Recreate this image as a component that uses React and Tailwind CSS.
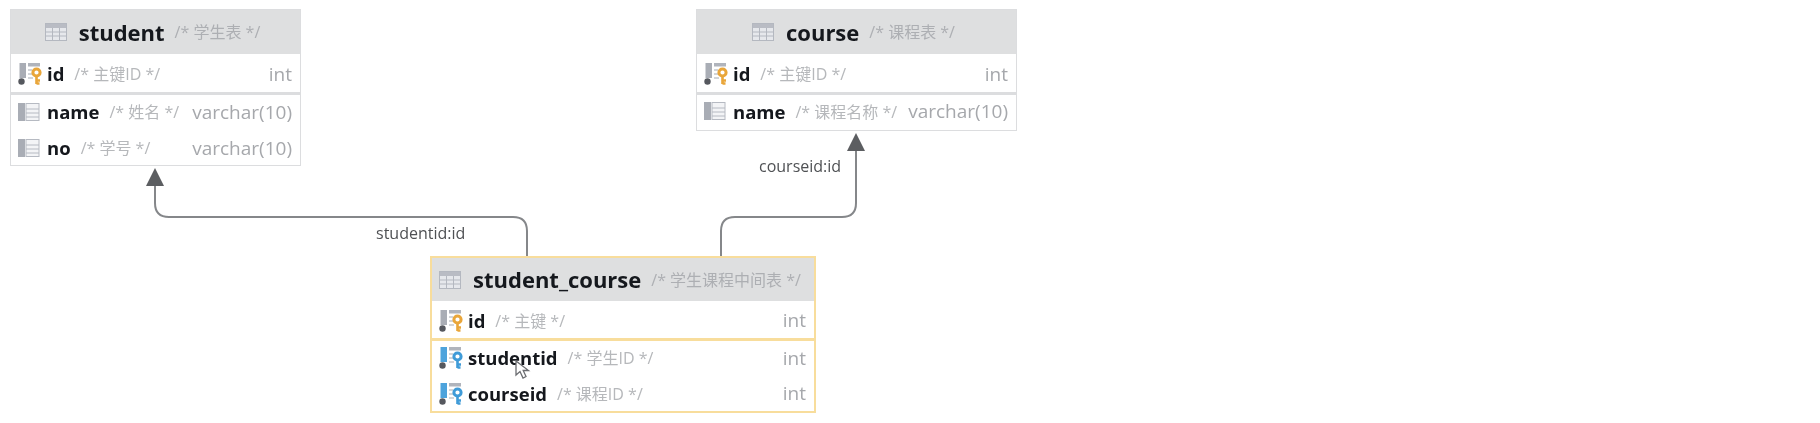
import React from 'react';

function TableIcon() {
  return (
    <svg width="22" height="18" viewBox="0 0 22 18" className="shrink-0">
      <rect x="0.5" y="0.5" width="21" height="17" fill="#e6e8ec" stroke="#b4b8c0" />
      <rect x="1" y="1" width="20" height="4" fill="#b9bcc4" />
      <path d="M1 9h20M1 13h20M7.5 5v12M14.5 5v12" stroke="#b4b8c0" strokeWidth="1" />
    </svg>
  );
}

function KeyIcon({ color, bar }) {
  return (
    <svg width="25" height="22" viewBox="0 0 25 22" className="shrink-0">
      <rect x="1.5" y="0" width="6.5" height="15" fill={bar} />
      <rect x="10" y="0" width="12" height="3.5" fill="#b0b4bc" />
      <path d="M10 7h4M10 11h4M10 15h5" stroke="#c4c7cd" strokeWidth="1.5" />
      <circle cx="3.5" cy="18.5" r="3.2" fill="#55585e" />
      <circle cx="18.5" cy="9.5" r="3.6" fill="none" stroke={color} strokeWidth="3" />
      <path d="M18.5 13v8M18.5 17.5h3.5M18.5 20.5h3" stroke={color} strokeWidth="2.6" fill="none" />
    </svg>
  );
}

function ColumnIcon() {
  return (
    <svg width="22" height="19" viewBox="0 0 22 19" className="shrink-0">
      <rect x="0" y="0" width="7" height="18" fill="#a9adb5" />
      <rect x="8" y="0.5" width="13" height="17" fill="#f3f4f6" stroke="#b6bac2" />
      <path d="M8 6h13M8 10h13M8 14h13" stroke="#b6bac2" strokeWidth="1" />
    </svg>
  );
}

function Row({ icon, name, comment, type, hClass }) {
  return (
    <div className={`flex items-center pl-[7px] pr-[8px] ${hClass}`}>
      <span className="flex w-[29px] shrink-0">{icon}</span>
      <span className="text-[18.5px] font-bold text-[#15181d]">{name}</span>
      <span className="ml-[10px] text-[16px] text-[#b6b8bb]">{comment}</span>
      <span className="ml-auto text-[19px] text-[#a6a8ac]">{type}</span>
    </div>
  );
}

function Header({ title, comment, hClass }) {
  return (
    <div className={`flex items-center justify-center bg-[#dedfe0] pr-[6px] ${hClass}`}>
      <TableIcon />
      <span className="ml-[12px] text-[22px] font-bold text-[#15181d]">{title}</span>
      <span className="ml-[10px] text-[16px] text-[#adafb3]">{comment}</span>
    </div>
  );
}

const pk = <KeyIcon color="#e9a63a" bar="#a9adb5" />;
const fk = <KeyIcon color="#3f9bd8" bar="#4da3dc" />;
const col = <ColumnIcon />;

export default function App() {
  return (
    <div className="relative h-[423px] w-[1820px] overflow-hidden bg-white font-['Open_Sans','Noto_Sans_CJK_SC',sans-serif] blur-[0.6px]">
      {/* student */}
      <div className="absolute left-[10px] top-[9px] w-[291px] border border-[#dcdddf]">
        <Header title="student" comment="/* 学生表 */" hClass="h-[44px]" />
        <Row icon={pk} name="id" comment="/* 主键ID */" type="int" hClass="h-[41px] pt-[2px] border-b-[3px] border-[#dcdddf]" />
        <Row icon={col} name="name" comment="/* 姓名 */" type="varchar(10)" hClass="h-[36px] pb-[2px]" />
        <Row icon={col} name="no" comment="/* 学号 */" type="varchar(10)" hClass="h-[34px]" />
      </div>

      {/* course */}
      <div className="absolute left-[696px] top-[9px] w-[321px] border border-[#dcdddf]">
        <Header title="course" comment="/* 课程表 */" hClass="h-[44px]" />
        <Row icon={pk} name="id" comment="/* 主键ID */" type="int" hClass="h-[41px] pt-[2px] border-b-[3px] border-[#dcdddf]" />
        <Row icon={col} name="name" comment="/* 课程名称 */" type="varchar(10)" hClass="h-[35px] pb-[2px]" />
      </div>

      {/* student_course */}
      <div className="absolute left-[430px] top-[256px] w-[386px] border-2 border-[#f8dd9c]">
        <Header title="student_course" comment="/* 学生课程中间表 */" hClass="h-[43px]" />
        <Row icon={pk} name="id" comment="/* 主键 */" type="int" hClass="h-[40px] pt-[2px] border-b-[3px] border-[#f8dd9c]" />
        <Row icon={fk} name="studentid" comment="/* 学生ID */" type="int" hClass="h-[35px] pb-[1px]" />
        <Row icon={fk} name="courseid" comment="/* 课程ID */" type="int" hClass="h-[35px]" />
      </div>

      {/* relationship lines */}
      <svg className="absolute left-0 top-0" width="1820" height="423">
        <path d="M527 256V231Q527 217 513 217H169Q155 217 155 203V184" fill="none" stroke="#85878a" strokeWidth="2" />
        <path d="M155 168L146 186H164Z" fill="#5c5e61" />
        <path d="M721 256V231Q721 217 735 217H842Q856 217 856 203V150" fill="none" stroke="#85878a" strokeWidth="2" />
        <path d="M856 133L847 151H865Z" fill="#5c5e61" />
      </svg>

      <span className="absolute left-[376px] top-[222px] text-[16px] leading-[22px] text-[#4f5154]">studentid:id</span>
      <span className="absolute left-[759px] top-[155px] text-[16px] leading-[22px] text-[#4f5154]">courseid:id</span>

      {/* mouse cursor */}
      <svg className="absolute left-[515px] top-[360px]" width="17" height="20" viewBox="0 0 17 20">
        <path d="M1 1L1 15L5 11.5L8 18L11 16.5L8.2 10.5L13.5 10.5Z" fill="#fff" stroke="#6c6e72" strokeWidth="1.3" />
      </svg>
    </div>
  );
}
